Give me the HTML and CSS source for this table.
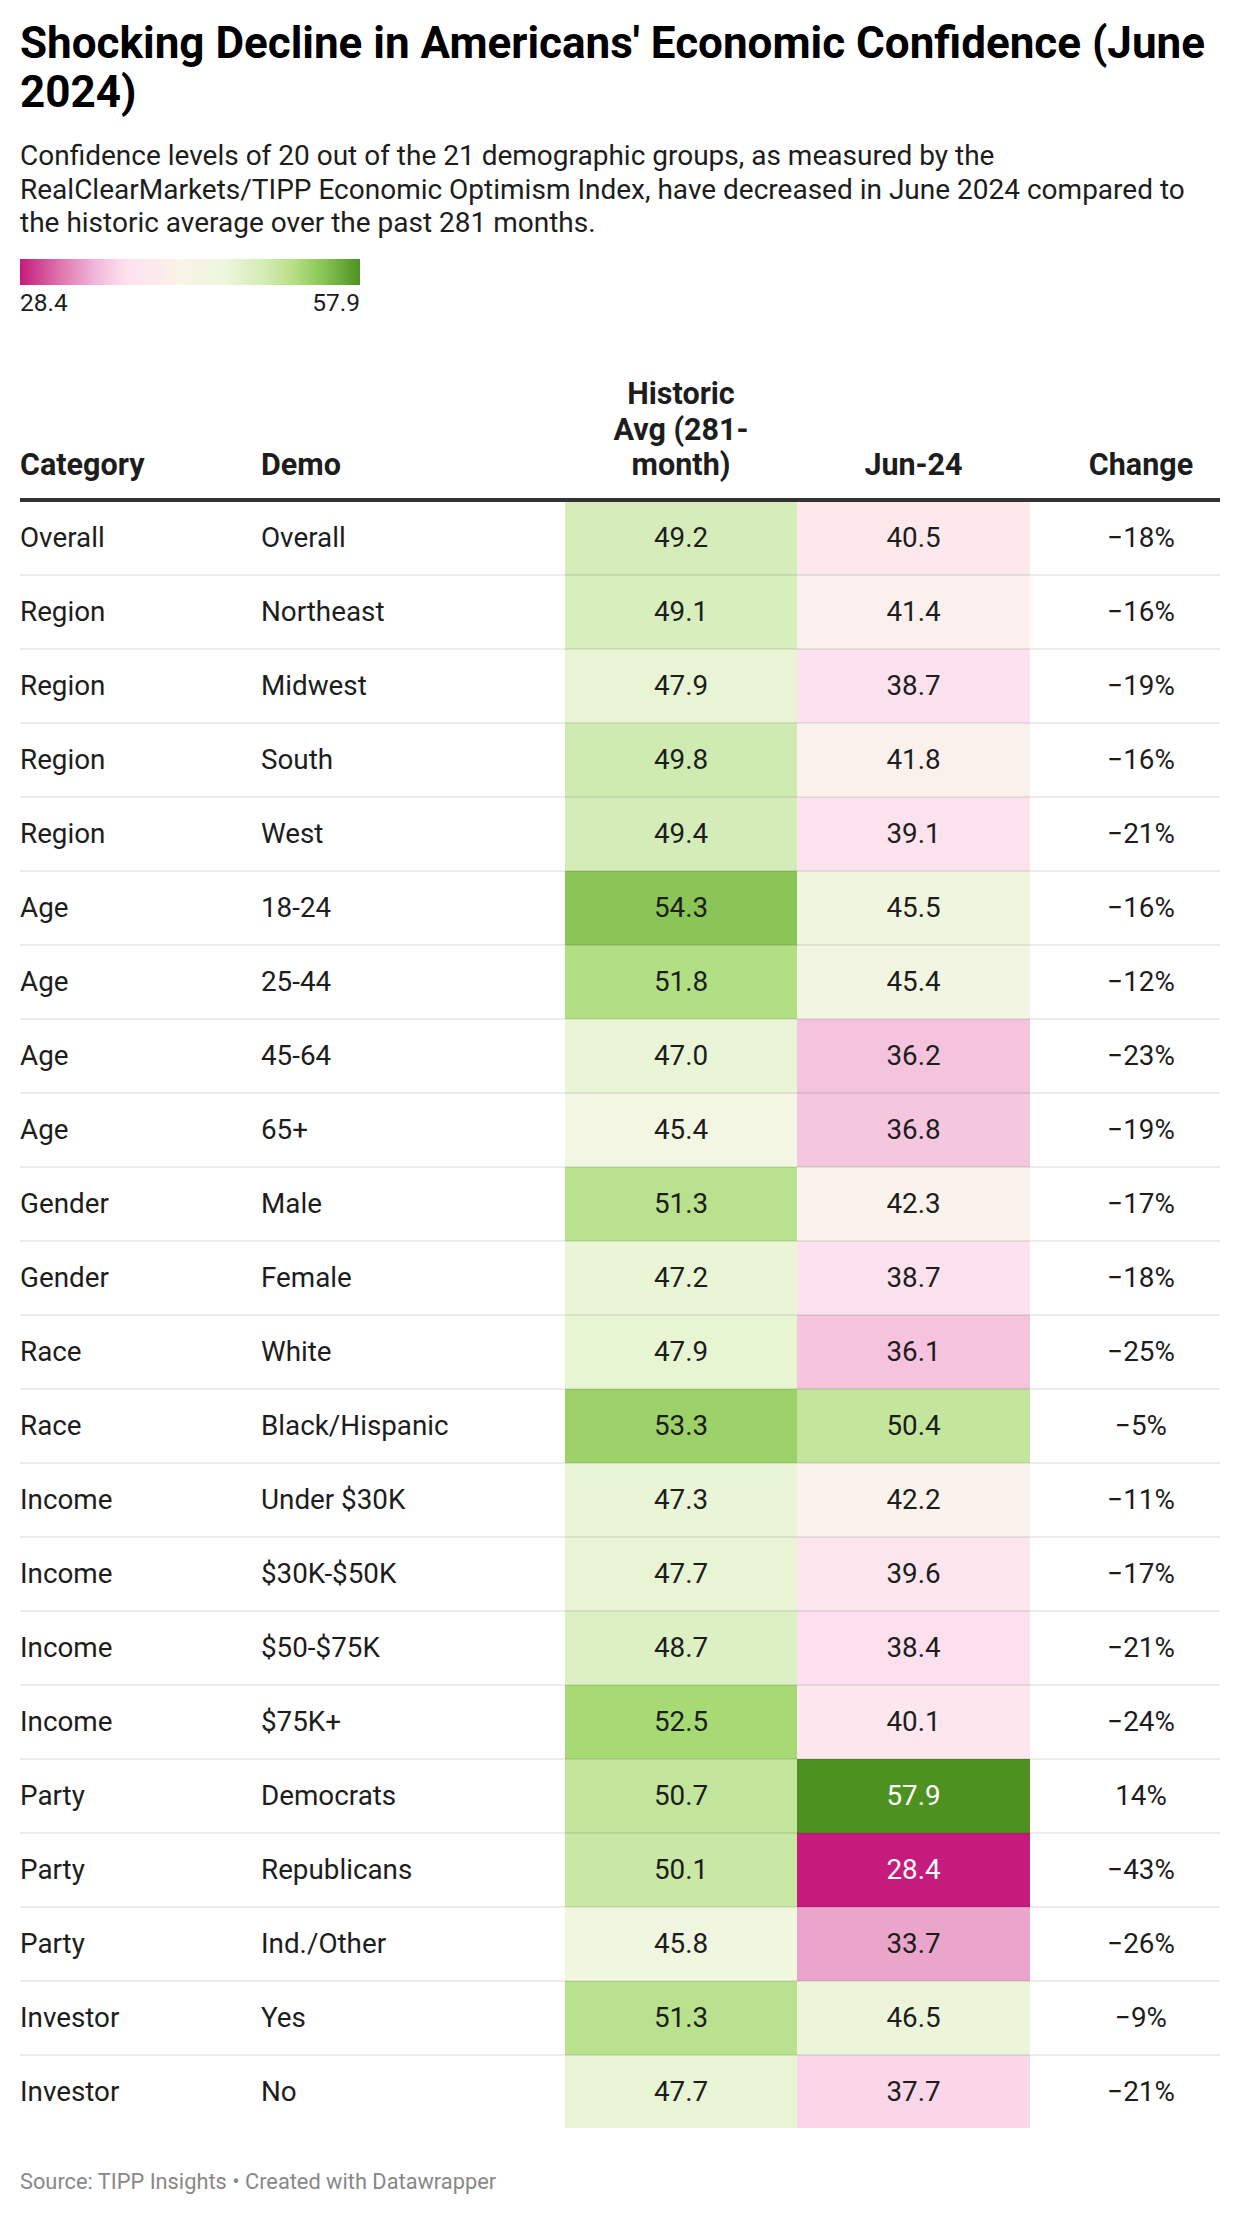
FILE: index.html
```html
<!DOCTYPE html>
<html lang="en">
<head>
<meta charset="utf-8">
<title>Shocking Decline in Americans' Economic Confidence</title>
<link rel="stylesheet" href="styles.css">
</head>
<body>
<div class="chart">
  <h1 class="title">Shocking Decline in Americans' Economic Confidence (June 2024)</h1>
  <p class="desc">Confidence levels of 20 out of the 21 demographic groups, as measured by the RealClearMarkets/TIPP Economic Optimism Index, have decreased in June 2024 compared to the historic average over the past 281 months.</p>
  <div class="legend">
    <div class="legend-bar"></div>
    <div class="legend-labels"><span>28.4</span><span>57.9</span></div>
  </div>
  <table class="tbl">
    <colgroup>
      <col class="c-cat"><col class="c-demo"><col class="c-hist"><col class="c-jun"><col class="c-chg">
    </colgroup>
    <thead>
      <tr>
        <th class="left">Category</th>
        <th class="left">Demo</th>
        <th class="num">Historic<br>Avg (281-<br>month)</th>
        <th class="num">Jun-24</th>
        <th class="chg">Change</th>
      </tr>
    </thead>
    <tbody>
      <tr><td>Overall</td><td>Overall</td><td class="num" style="background:#d6edbb">49.2</td><td class="num" style="background:#fde9ec">40.5</td><td class="chg">−18%</td></tr>
      <tr><td>Region</td><td>Northeast</td><td class="num" style="background:#d7eebd">49.1</td><td class="num" style="background:#fbf0ee">41.4</td><td class="chg">−16%</td></tr>
      <tr><td>Region</td><td>Midwest</td><td class="num" style="background:#e8f4d4">47.9</td><td class="num" style="background:#fce2ee">38.7</td><td class="chg">−19%</td></tr>
      <tr><td>Region</td><td>South</td><td class="num" style="background:#d0ebb2">49.8</td><td class="num" style="background:#faf1ed">41.8</td><td class="chg">−16%</td></tr>
      <tr><td>Region</td><td>West</td><td class="num" style="background:#d4edb8">49.4</td><td class="num" style="background:#fde3ee">39.1</td><td class="chg">−21%</td></tr>
      <tr><td>Age</td><td>18-24</td><td class="num" style="background:#8bc557">54.3</td><td class="num" style="background:#f0f5e0">45.5</td><td class="chg">−16%</td></tr>
      <tr><td>Age</td><td>25-44</td><td class="num" style="background:#b2df84">51.8</td><td class="num" style="background:#f1f5e1">45.4</td><td class="chg">−12%</td></tr>
      <tr><td>Age</td><td>45-64</td><td class="num" style="background:#eaf5d7">47.0</td><td class="num" style="background:#f4c4de">36.2</td><td class="chg">−23%</td></tr>
      <tr><td>Age</td><td>65+</td><td class="num" style="background:#f2f6e2">45.4</td><td class="num" style="background:#f5c7df">36.8</td><td class="chg">−19%</td></tr>
      <tr><td>Gender</td><td>Male</td><td class="num" style="background:#b9e18e">51.3</td><td class="num" style="background:#faf2ec">42.3</td><td class="chg">−17%</td></tr>
      <tr><td>Gender</td><td>Female</td><td class="num" style="background:#eaf5d6">47.2</td><td class="num" style="background:#fce2ee">38.7</td><td class="chg">−18%</td></tr>
      <tr><td>Race</td><td>White</td><td class="num" style="background:#e8f5d3">47.9</td><td class="num" style="background:#f5c3dd">36.1</td><td class="chg">−25%</td></tr>
      <tr><td>Race</td><td>Black/Hispanic</td><td class="num" style="background:#9dd169">53.3</td><td class="num" style="background:#c4e69c">50.4</td><td class="chg">−5%</td></tr>
      <tr><td>Income</td><td>Under $30K</td><td class="num" style="background:#eaf4d6">47.3</td><td class="num" style="background:#faf2ed">42.2</td><td class="chg">−11%</td></tr>
      <tr><td>Income</td><td>$30K-$50K</td><td class="num" style="background:#e8f4d3">47.7</td><td class="num" style="background:#fce6ed">39.6</td><td class="chg">−17%</td></tr>
      <tr><td>Income</td><td>$50-$75K</td><td class="num" style="background:#ddf0c4">48.7</td><td class="num" style="background:#fde0ee">38.4</td><td class="chg">−21%</td></tr>
      <tr><td>Income</td><td>$75K+</td><td class="num" style="background:#a7da74">52.5</td><td class="num" style="background:#fde7ee">40.1</td><td class="chg">−24%</td></tr>
      <tr><td>Party</td><td>Democrats</td><td class="num" style="background:#c3e59b">50.7</td><td class="num inv" style="background:#4d9221">57.9</td><td class="chg">14%</td></tr>
      <tr><td>Party</td><td>Republicans</td><td class="num" style="background:#c9e8a3">50.1</td><td class="num inv" style="background:#c51b7c">28.4</td><td class="chg">−43%</td></tr>
      <tr><td>Party</td><td>Ind./Other</td><td class="num" style="background:#f0f6df">45.8</td><td class="num" style="background:#eba5ca">33.7</td><td class="chg">−26%</td></tr>
      <tr><td>Investor</td><td>Yes</td><td class="num" style="background:#b9e18e">51.3</td><td class="num" style="background:#ecf4da">46.5</td><td class="chg">−9%</td></tr>
      <tr><td>Investor</td><td>No</td><td class="num" style="background:#e8f4d3">47.7</td><td class="num" style="background:#fad7e8">37.7</td><td class="chg">−21%</td></tr>
    </tbody>
  </table>
  <div class="footer">Source: TIPP Insights • Created with Datawrapper</div>
</div>
</body>
</html>
```

FILE: styles.css
```css
html, body {
  margin: 0;
  padding: 0;
  background: #ffffff;
}

body {
  font-family: Roboto, "Liberation Sans", Arial, sans-serif;
  color: #1d1d1d;
}

.chart {
  width: 1200px;
  padding: 19px 20px 0 20px;
}

.title {
  margin: 0;
  font-size: 44px;
  line-height: 49px;
  font-weight: 700;
  color: #000000;
}

.desc {
  margin: 22px 0 0 0;
  font-size: 28px;
  line-height: 33.7px;
  color: #1d1d1d;
}

.legend {
  margin-top: 19px;
  width: 340px;
}

.legend-bar {
  height: 26px;
  background: linear-gradient(to right,
    #c51b7d 0%, #de77ae 12%, #f1b6da 22%, #fde0ef 31%,
    #faf3e9 47%, #eef6dd 60%, #d5edb9 71%, #b8e186 80%,
    #8bc557 89%, #4d9221 100%);
}

.legend-labels {
  display: flex;
  justify-content: space-between;
  margin-top: 6px;
  font-size: 24.5px;
  line-height: 24px;
  color: #1d1d1d;
}

.tbl {
  margin-top: 61px;
  width: 1200px;
  border-collapse: collapse;
  table-layout: fixed;
  font-size: 27.8px;
}

.c-cat { width: 241px; }
.c-demo { width: 304px; }
.c-hist { width: 232px; }
.c-jun { width: 233px; }
.c-chg { width: 190px; }

.tbl th {
  font-size: 30.5px;
  font-weight: 700;
  line-height: 35.5px;
  vertical-align: bottom;
  padding: 0 0 15px 0;
  border-bottom: 4px solid #333333;
  color: #1d1d1d;
}

.tbl th.left { text-align: left; }
.tbl th.num { text-align: center; }

.tbl td {
  height: 72px;
  padding: 0;
  vertical-align: middle;
  line-height: 30px;
  border-bottom: 2px solid rgba(0, 0, 0, 0.075);
}

.tbl tbody tr:last-child td {
  border-bottom: none;
}

.tbl td.num {
  text-align: center;
}

.tbl td.inv {
  color: #ffffff;
}

.tbl .chg {
  text-align: center;
  padding-left: 32px;
}

.tbl th.chg {
  padding-left: 32px;
}

.footer {
  margin-top: 42px;
  font-size: 21.8px;
  line-height: 24px;
  color: #888888;
}
```
